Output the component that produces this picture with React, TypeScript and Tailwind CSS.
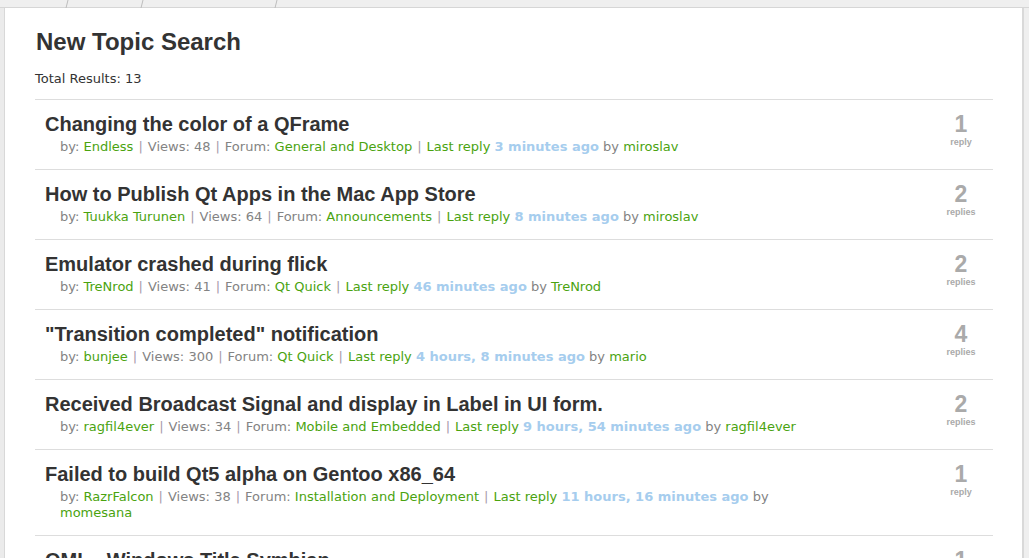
import React from "react";

type Topic = {
  title: string;
  author: string;
  views: number;
  forum: string;
  ago: string;
  lastBy: string;
  replies: number;
};

const topics: Topic[] = [
  { title: "Changing the color of a QFrame", author: "Endless", views: 48, forum: "General and Desktop", ago: "3 minutes ago", lastBy: "miroslav", replies: 1 },
  { title: "How to Publish Qt Apps in the Mac App Store", author: "Tuukka Turunen", views: 64, forum: "Announcements", ago: "8 minutes ago", lastBy: "miroslav", replies: 2 },
  { title: "Emulator crashed during flick", author: "TreNrod", views: 41, forum: "Qt Quick", ago: "46 minutes ago", lastBy: "TreNrod", replies: 2 },
  { title: "\"Transition completed\" notification", author: "bunjee", views: 300, forum: "Qt Quick", ago: "4 hours, 8 minutes ago", lastBy: "mario", replies: 4 },
  { title: "Received Broadcast Signal and display in Label in UI form.", author: "ragfil4ever", views: 34, forum: "Mobile and Embedded", ago: "9 hours, 54 minutes ago", lastBy: "ragfil4ever", replies: 2 },
  { title: "Failed to build Qt5 alpha on Gentoo x86_64", author: "RazrFalcon", views: 38, forum: "Installation and Deployment", ago: "11 hours, 16 minutes ago", lastBy: "momesana", replies: 1 },
  { title: "QML - Windows Title Symbian", author: "someone", views: 12, forum: "Mobile and Embedded", ago: "12 hours ago", lastBy: "someone", replies: 1 },
];

const Sep = () => <span className="mx-[5px] text-[#a79aaa]">|</span>;

function TopicRow({ topic }: { topic: Topic }) {
  return (
    <div className="flex border-t border-[#dddddd]">
      <div className="flex-1 pt-3 pb-[14px] pl-[10px]">
        <div className="h-6 text-[20px] font-bold leading-6 text-[#333333] font-['Liberation_Sans',Arial,sans-serif]">
          {topic.title}
        </div>
        <div className="max-w-[760px] pt-[3px] pl-[15px] text-[13px] leading-4 text-[#838383] font-['DejaVu_Sans',Verdana,sans-serif]">
          by: <span className="text-[#4aa30f]">{topic.author}</span>
          <Sep />
          Views: {topic.views}
          <Sep />
          Forum: <span className="text-[#4aa30f]">{topic.forum}</span>
          <Sep />
          <span className="text-[#4aa30f]">Last reply</span>{" "}
          <span className="font-bold text-[#a6cdee]">{topic.ago}</span> by{" "}
          <span className="text-[#4aa30f]">{topic.lastBy}</span>
        </div>
      </div>
      <div className="w-16 pt-[12px] text-center font-['Liberation_Sans',Arial,sans-serif] text-[#aaaaaa]">
        <div className="text-[23px] font-bold leading-6">{topic.replies}</div>
        <div className="text-[9px] font-bold leading-3">
          {topic.replies === 1 ? "reply" : "replies"}
        </div>
      </div>
    </div>
  );
}

export default function App() {
  return (
    <div className="h-[558px] w-[1029px] overflow-hidden bg-[#ececec]">
      <div className="h-2 border-b border-[#d6d6d6] bg-[#efefef]">
        <svg width="1029" height="8" className="block">
          <line x1="66" y1="8" x2="68" y2="0" stroke="#bdbdbd" />
          <line x1="141" y1="8" x2="143" y2="0" stroke="#bdbdbd" />
          <line x1="275" y1="8" x2="277" y2="0" stroke="#bdbdbd" />
        </svg>
      </div>
      <div className="flex h-full">
        <div className="w-[5px] border-r border-[#d8d8d8] bg-[#ebebeb]" />
        <div className="w-[1017px] bg-white pl-[30px] pr-[29px]">
          <h1 className="mt-[20px] pl-[1px] text-[24px] font-bold leading-7 text-[#333333] font-['Liberation_Sans',Arial,sans-serif]">
            New Topic Search
          </h1>
          <div className="mt-[15px] mb-[12px] text-[13px] leading-4 text-[#333333] font-['DejaVu_Sans',Verdana,sans-serif]">
            Total Results: 13
          </div>
          <div>
            {topics.map((t) => (
              <TopicRow key={t.title} topic={t} />
            ))}
          </div>
        </div>
        <div className="w-[2px] bg-[#d9d9d9]" />
        <div className="flex-1 bg-[#efefef]" />
      </div>
    </div>
  );
}
